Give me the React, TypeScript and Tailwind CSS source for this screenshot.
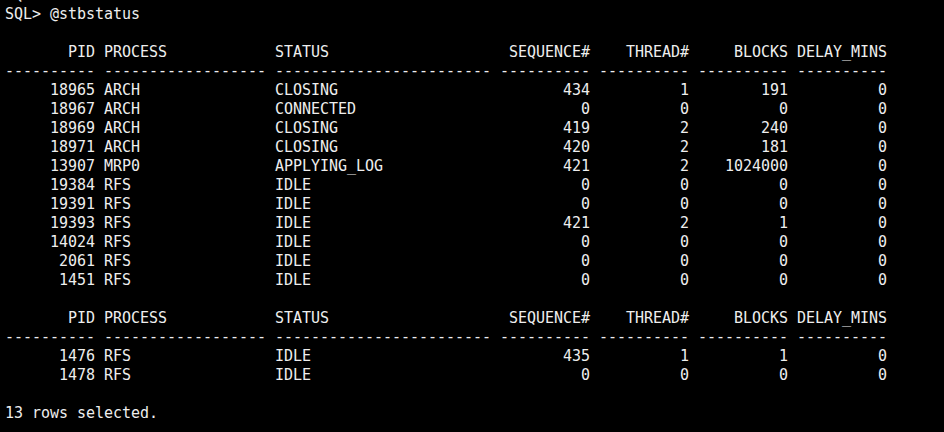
import React from "react";

type Row = [number, string, string, number, number, number, number];

const rows1: Row[] = [
  [18965, "ARCH", "CLOSING", 434, 1, 191, 0],
  [18967, "ARCH", "CONNECTED", 0, 0, 0, 0],
  [18969, "ARCH", "CLOSING", 419, 2, 240, 0],
  [18971, "ARCH", "CLOSING", 420, 2, 181, 0],
  [13907, "MRP0", "APPLYING_LOG", 421, 2, 1024000, 0],
  [19384, "RFS", "IDLE", 0, 0, 0, 0],
  [19391, "RFS", "IDLE", 0, 0, 0, 0],
  [19393, "RFS", "IDLE", 421, 2, 1, 0],
  [14024, "RFS", "IDLE", 0, 0, 0, 0],
  [2061, "RFS", "IDLE", 0, 0, 0, 0],
  [1451, "RFS", "IDLE", 0, 0, 0, 0],
];

const rows2: Row[] = [
  [1476, "RFS", "IDLE", 435, 1, 1, 0],
  [1478, "RFS", "IDLE", 0, 0, 0, 0],
];

const header =
  "PID".padStart(10) +
  " " +
  "PROCESS".padEnd(18) +
  " " +
  "STATUS".padEnd(24) +
  " " +
  "SEQUENCE#".padStart(10) +
  " " +
  "THREAD#".padStart(10) +
  " " +
  "BLOCKS".padStart(10) +
  " " +
  "DELAY_MINS".padStart(10);

const dashes = [10, 18, 24, 10, 10, 10, 10].map((n) => "-".repeat(n)).join(" ");

function fmt(r: Row) {
  return (
    String(r[0]).padStart(10) +
    " " +
    r[1].padEnd(18) +
    " " +
    r[2].padEnd(24) +
    " " +
    String(r[3]).padStart(10) +
    " " +
    String(r[4]).padStart(10) +
    " " +
    String(r[5]).padStart(10) +
    " " +
    String(r[6]).padStart(10)
  );
}

const lines: string[] = [
  "SQL> ",
  "SQL> @stbstatus",
  "",
  header,
  dashes,
  ...rows1.map(fmt),
  "",
  header,
  dashes,
  ...rows2.map(fmt),
  "",
  "13 rows selected.",
  "",
];

export default function App() {
  return (
    <div className="w-[944px] h-[432px] bg-black overflow-hidden">
      <div
        className="mt-[-14px] pl-[5px] text-[15px] leading-[19px] tracking-[-0.03px] text-[#eeeeee] whitespace-pre"
        style={{ fontFamily: '"DejaVu Sans Mono", monospace' }}
      >
        {lines.map((l, i) => (
          <div key={i} className="h-[19px]">
            {l === "" ? "\u00a0" : l}
          </div>
        ))}
      </div>
    </div>
  );
}
